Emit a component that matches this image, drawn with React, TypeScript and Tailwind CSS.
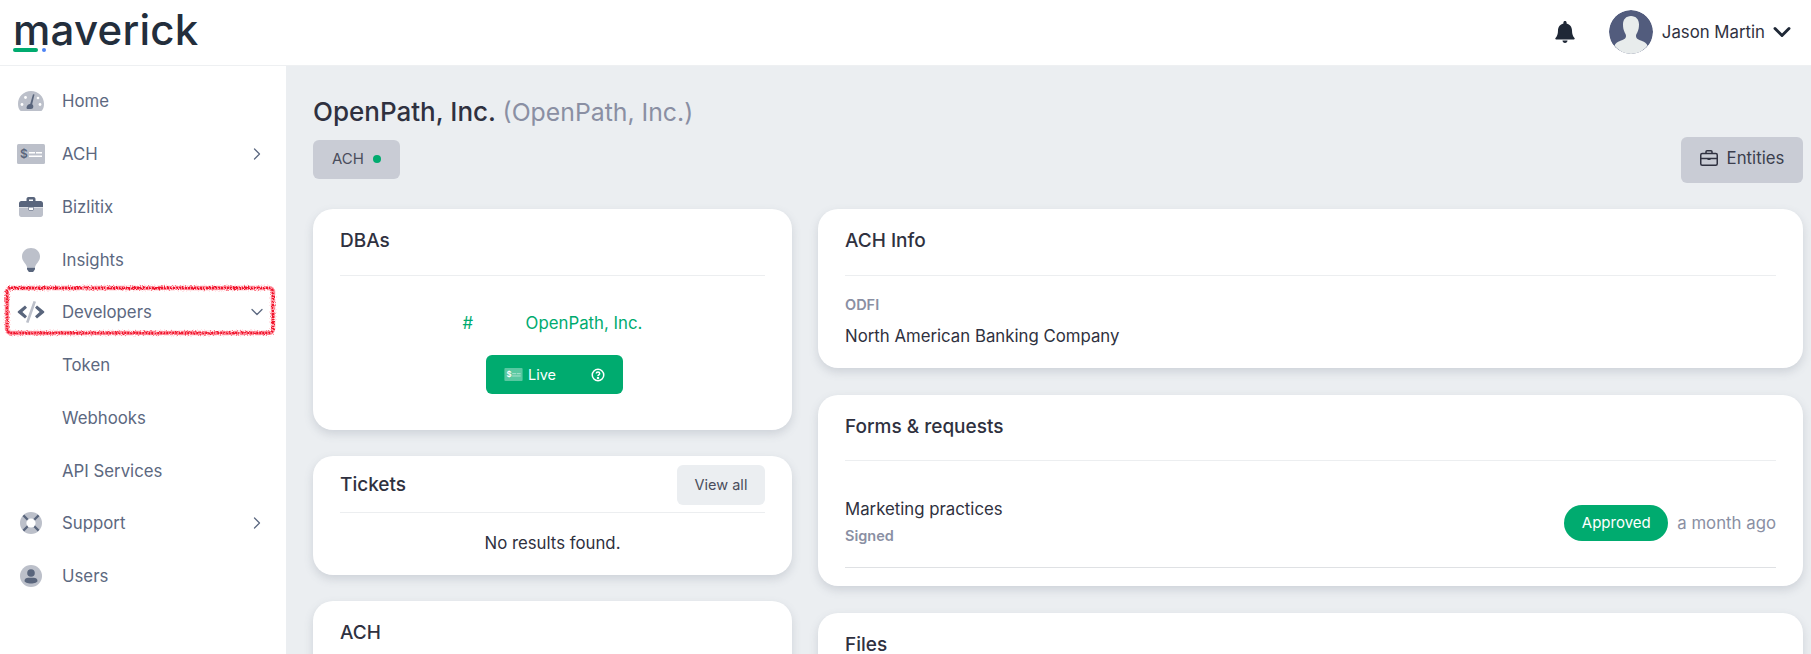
import { ChevronDown, ChevronRight } from "lucide-react";
import type { ReactNode } from "react";

const GaugeIcon = () => (
  <svg width="26" height="20" viewBox="0 0 26 20">
    <path d="M13 0C5.800 0 0 5.600 0 12.800c0 2.400.500 4.600 1.500 6 .400.800 1 1.200 1.900 1.200h19.200c.900 0 1.500-.400 1.900-1.200 1-1.400 1.500-3.600 1.500-6C26 5.600 20.200 0 13 0z" fill="#bcc0ca" />
    <path d="M16.500 3.500l-2.300 9.700c.800.500 1.200 1.500 1.100 2.500-.100 1.300-1 2.300-2.300 2.300H9.500c-.800 0-1.100-.800-.900-1.700.300-1.700 1.700-3.300 3.600-3.300L15 3.300z" fill="#59657c" />
    <circle cx="4" cy="13.500" r="1.400" fill="#fff" />
    <circle cx="22" cy="13.500" r="1.400" fill="#fff" />
    <circle cx="7.500" cy="6.500" r="1.400" fill="#fff" />
    <circle cx="20" cy="7" r="1.300" fill="#fff" />
  </svg>
);

const CheckIcon = ({ bg = "#bcc0ca", fg = "#59657c", w = 28, h = 20 }: { bg?: string; fg?: string; w?: number; h?: number }) => (
  <svg width={w} height={h} viewBox="0 0 28 20">
    <rect width="28" height="20" rx="1.500" fill={bg} />
    <text x="7" y="14" fontSize="12" fontWeight="600" fontFamily="Inter, sans-serif" textAnchor="middle" fill={fg}>$</text>
    <rect x="12" y="8" width="6" height="1.500" fill={fg === "#fff" ? "#ffffff80" : "#fff"} />
    <rect x="19" y="8" width="6" height="1.500" fill={fg === "#fff" ? "#ffffff80" : "#fff"} />
    <rect x="12" y="11.500" width="13" height="1.500" fill={fg === "#fff" ? "#ffffff80" : "#fff"} />
  </svg>
);

const BriefcaseIcon = () => (
  <svg width="24" height="20" viewBox="0 0 24 20">
    <path d="M0 10.500h24v7c0 1.400-1 2.500-2.300 2.500H2.300C1 20 0 18.900 0 17.500z" fill="#bcc0ca" />
    <path d="M7.500 4V2c0-1.100.900-2 2-2h5c1.100 0 2 .900 2 2v2h5.200C23 4 24 5 24 6.300V10H0V6.300C0 5 1 4 2.300 4zm2.500 0h4V2.500h-4zM9.500 10h5v2.500c0 .600-.400 1-1 1h-3c-.600 0-1-.400-1-1z" fill="#59657c" fillRule="evenodd" />
    <rect x="10" y="10.500" width="4" height="2.500" fill="#fff" />
  </svg>
);

const BulbIcon = () => (
  <svg width="18" height="24" viewBox="0 0 18 24">
    <path d="M9 0C3.900 0 0 3.800 0 8.600c0 2.300.900 4.300 2.300 5.800 1 1 2.200 2.800 2.700 4.600h8c.500-1.800 1.700-3.600 2.700-4.600C17.100 12.900 18 10.900 18 8.600 18 3.800 14.100 0 9 0z" fill="#bcc0ca" />
    <path d="M5 19.500h8V21c0 .500-.200.800-.500 1.100L11.500 23.400c-.300.400-.600.600-1.100.600H7.600c-.500 0-.800-.200-1.100-.600l-1-1.300c-.300-.300-.500-.600-.500-1.100z" fill="#59657c" />
  </svg>
);

const CodeIcon = () => (
  <svg width="28" height="22" viewBox="0 0 28 22">
    <path d="M16.500 0l2.500.700L11.500 22 9 21.300z" fill="#bcc0ca" />
    <path d="M8 4.500l2 2.200L5.400 11 10 15.300l-2 2.200L1 11.800a1.100 1.100 0 0 1 0-1.600zM20 4.500l-2 2.200L22.600 11 18 15.300l2 2.200 7-5.700a1.100 1.100 0 0 0 0-1.600z" fill="#59657c" />
  </svg>
);

const SupportIcon = () => (
  <svg width="22" height="22" viewBox="0 0 22 22">
    <circle cx="11" cy="11" r="11" fill="#bcc0ca" />
    <path d="M4.200 2.600L9.500 7.900 7.900 9.500 2.600 4.200zM17.800 2.600L12.500 7.900l1.600 1.600 5.300-5.300zM4.200 19.400l5.300-5.300-1.600-1.600-5.300 5.300zM17.800 19.400l-5.300-5.300 1.600-1.600 5.300 5.300z" fill="#59657c" />
    <circle cx="11" cy="11" r="4.600" fill="#fff" />
  </svg>
);

const UserCircleIcon = () => (
  <svg width="22" height="22" viewBox="0 0 22 22">
    <circle cx="11" cy="11" r="11" fill="#bcc0ca" />
    <circle cx="11" cy="8" r="3.800" fill="#59657c" />
    <path d="M4.500 16c0-2 1.800-3.200 3.700-3.200h5.600c1.900 0 3.700 1.200 3.700 3.200 0 1-2.800 2.600-6.500 2.600S4.500 17 4.500 16z" fill="#59657c" />
  </svg>
);

const Logo = () => (
  <div className="relative mb-[4px] leading-none">
    <span className="text-[42px] font-medium tracking-[0.25px] text-[#232e3c] leading-none">maverick</span>
    <span className="absolute left-0 top-[39px] h-[4px] w-[25px] rounded-sm bg-[#00ab6f]" />
    <span className="absolute left-[29px] top-[39px] h-[4px] w-[4px] rounded-full bg-[#4d84f5]" />
  </div>
);

const Avatar = () => (
  <svg width="44" height="44" viewBox="0 0 44 44" className="rounded-full">
    <circle cx="22" cy="22" r="22" fill="#525c7d" />
    <path d="M22 6c-5 0-8 3.500-8 8.500 0 3 .500 5 1.300 7 .600 1.600 1.700 2.800 1.700 4.500 0 3-3.500 4-6 5-2.600 1-4.500 2.300-5.500 4.500C9.500 40.800 15.500 44 22 44s12.500-3.200 16.500-8.500c-1-2.200-2.900-3.500-5.500-4.500-2.500-1-6-2-6-5 0-1.700 1.100-2.900 1.700-4.500.800-2 1.300-4 1.300-7C30 9.500 27 6 22 6z" fill="#e8ecec" />
  </svg>
);

// hand-drawn looking red marker round the Developers row
const Scribble = () => (
  <svg className="absolute left-[3px] top-[-2px] h-[53px] w-[274px]" viewBox="0 0 274 53" fill="none">
    <defs>
      <filter id="rough" x="-5%" y="-20%" width="110%" height="140%">
        <feTurbulence type="fractalNoise" baseFrequency="0.8" numOctaves="2" seed="4" />
        <feDisplacementMap in="SourceGraphic" scale="3.500" />
      </filter>
    </defs>
    <rect x="4" y="4" width="266" height="45" rx="4" stroke="#ff9aa6" strokeWidth="4.500" filter="url(#rough)" />
    <rect x="4" y="4" width="266" height="45" rx="4" stroke="#f0182e" strokeWidth="2.500" strokeDasharray="2 1" filter="url(#rough)" />
  </svg>
);

const NavItem = ({ icon, label, arrow }: { icon?: ReactNode; label: string; arrow?: "right" | "down" }) => (
  <div className="flex h-[52.750px] items-center">
    <div className="flex w-[62px] shrink-0 justify-center">{icon}</div>
    <span className="flex-1 text-[#5c6880]">{label}</span>
    {arrow === "right" && <ChevronRight size={20} strokeWidth={1.5} className="mr-[19px] text-[#5c6880]" />}
    {arrow === "down" && <ChevronDown size={20} strokeWidth={1.5} className="mr-[19px] text-[#5c6880]" />}
  </div>
);

const Sidebar = () => (
  <aside className="w-[286px] shrink-0 bg-white pt-[9px]">
    <NavItem icon={<GaugeIcon />} label="Home" />
    <NavItem icon={<CheckIcon />} label="ACH" arrow="right" />
    <NavItem icon={<BriefcaseIcon />} label="Bizlitix" />
    <NavItem icon={<BulbIcon />} label="Insights" />
    <div className="relative">
      <NavItem icon={<CodeIcon />} label="Developers" arrow="down" />
      <Scribble />
    </div>
    <NavItem label="Token" />
    <NavItem label="Webhooks" />
    <NavItem label="API Services" />
    <NavItem icon={<SupportIcon />} label="Support" arrow="right" />
    <NavItem icon={<UserCircleIcon />} label="Users" />
  </aside>
);

const Card = ({ title, action, children, className }: { title: string; action?: ReactNode; children?: ReactNode; className?: string }) => (
  <section className={`rounded-[20px] bg-white px-[27px] shadow-[0_4px_10px_rgba(90,100,120,0.2)] ${className ?? ""}`}>
    <div className="flex items-center justify-between">
      <h2 className="text-[19px] leading-[28px] font-medium text-[#2f3140]">{title}</h2>
      {action}
    </div>
    {children}
  </section>
);

export default function App() {
  return (
    <div className="flex h-[654px] flex-col overflow-hidden bg-[#ebeef1] font-['Inter',sans-serif] text-[16.800px] leading-[26px]">
      <header className="flex h-[66px] shrink-0 items-center justify-between border-b border-[#eef0f2] bg-white pb-[2px] pl-[13px] pr-[15px]">
        <Logo />
        <div className="flex items-center">
          <svg width="20" height="22" viewBox="0 0 20 22" className="mr-[34px]">
            <path d="M10 0c-1 0-1.600.700-1.600 1.600v.800C5 3.200 3 6 3 9.500c0 4-1 5.800-2.500 7.500-.500.600-.100 1.500.700 1.500h17.600c.800 0 1.200-.900.700-1.500C18 15.300 17 13.500 17 9.500c0-3.500-2-6.300-5.400-7.100v-.800C11.600.700 11 0 10 0z" fill="#1f2836" />
            <path d="M7.500 19.500h5c0 1.400-1.100 2.500-2.500 2.500s-2.500-1.100-2.500-2.500z" fill="#1f2836" />
          </svg>
          <Avatar />
          <span className="ml-[9px] text-[#2f3140]">Jason Martin</span>
          <ChevronDown size={28} strokeWidth={2.500} className="ml-[3px] text-[#1f2836]" />
        </div>
      </header>
      <div className="flex flex-1 overflow-hidden">
        <Sidebar />
        <main className="flex-1 pl-[27px] pr-[8px] pt-[31px]">
          <h1 className="text-[26px] leading-[30px] font-medium text-[#2f3140]">
            OpenPath, Inc. <span className="text-[24.800px] font-normal text-[#8a8fa3]">(OpenPath, Inc.)</span>
          </h1>
          <div className="mt-[10px] flex items-start justify-between">
            <button className="mt-[3px] flex h-[39px] w-[87px] items-center justify-center gap-[9px] rounded-[6px] bg-[#c9ccd5] pb-[2px] text-[15px] text-[#4a4d5c]">
              ACH <span className="h-[8px] w-[8px] rounded-full bg-[#00ab6f]" />
            </button>
            <button className="flex h-[46px] w-[122px] items-center justify-center gap-[9px] rounded-[6px] bg-[#c9ccd5] pb-[4px] text-[#3b3e4d]">
              <svg width="18" height="16" viewBox="0 0 18 16" fill="none" stroke="#2f3140" strokeWidth="1.500">
                <rect x="0.750" y="3.500" width="16.500" height="11.750" rx="1.500" />
                <path d="M6 3.500V1.800c0-.600.400-1 1-1h4c.600 0 1 .400 1 1v1.700M.750 8.500h16.500" />
                <rect x="7.500" y="8" width="3" height="2" fill="#2f3140" stroke="none" />
              </svg>
              Entities
            </button>
          </div>
          <div className="mt-[26px] flex gap-[26px]">
            <div className="flex w-[479px] shrink-0 flex-col gap-[26px]">
              <Card title="DBAs" className="h-[221px] pt-[18px]">
                <div className="mt-[20px] border-t border-[#eceef0] pt-[34px]">
                  <div className="flex justify-center text-[#00ab6f]">
                    <span className="w-[63px]">#</span>
                    <span>OpenPath, Inc.</span>
                  </div>
                  <div className="mt-[19px] flex justify-center pl-[4px]">
                    <button className="flex h-[39px] w-[137px] items-center rounded-[6px] bg-[#00ab6f] pl-[18px] text-[14.500px] text-white">
                      <CheckIcon bg="#ffffff59" fg="#fff" w={19} h={13} />
                      <span className="ml-[5px]">Live</span>
                      <svg width="14" height="14" viewBox="0 0 14 14" fill="none" stroke="#fff" strokeWidth="1.500" className="ml-[35px]">
                        <circle cx="7" cy="7" r="5.750" />
                        <path d="M5.300 5.600c0-1 .800-1.600 1.700-1.600s1.700.600 1.700 1.500c0 1.300-1.700 1.300-1.700 2.500" />
                        <circle cx="7" cy="10" r="0.500" fill="#fff" />
                      </svg>
                    </button>
                  </div>
                </div>
              </Card>
              <Card
                title="Tickets"
                className="h-[119px] pt-[9px]"
                action={
                  <button className="h-[40px] w-[88px] rounded-[6px] bg-[#ebeef1] text-[14.500px] text-[#4a4d5c]">View all</button>
                }
              >
                <div className="mt-[7px] border-t border-[#eceef0] pt-[17px] text-center text-[#2f3140]">No results found.</div>
              </Card>
              <Card title="ACH" className="h-[200px] pt-[18px]" />
            </div>
            <div className="flex flex-1 flex-col gap-[27px]">
              <Card title="ACH Info" className="h-[159px] pt-[18px]">
                <div className="mt-[20px] border-t border-[#eceef0] pt-[19px]">
                  <div className="text-[14.500px] leading-[20px] font-semibold text-[#8a8fa3]">ODFI</div>
                  <div className="mt-[8px] text-[#2f3140]">North American Banking Company</div>
                </div>
              </Card>
              <Card title="Forms & requests" className="h-[191px] pt-[18px]">
                <div className="mt-[19px] border-t border-[#eceef0] pt-[35px]">
                  <div className="flex items-center justify-between border-b border-[#dfe1e4] pb-[21px]">
                    <div>
                      <div className="text-[#2f3140]">Marketing practices</div>
                      <div className="mt-[4px] text-[14.500px] leading-[20px] font-semibold text-[#8a8fa3]">Signed</div>
                    </div>
                    <div className="flex items-center pt-[3px]">
                      <span className="flex h-[36px] w-[104px] items-center justify-center rounded-[18px] bg-[#00ab6f] text-[15px] text-white">Approved</span>
                      <span className="ml-[9px] text-[#8a8fa3]">a month ago</span>
                    </div>
                  </div>
                </div>
              </Card>
              <Card title="Files" className="h-[200px] pt-[18px]" />
            </div>
          </div>
        </main>
      </div>
    </div>
  );
}
